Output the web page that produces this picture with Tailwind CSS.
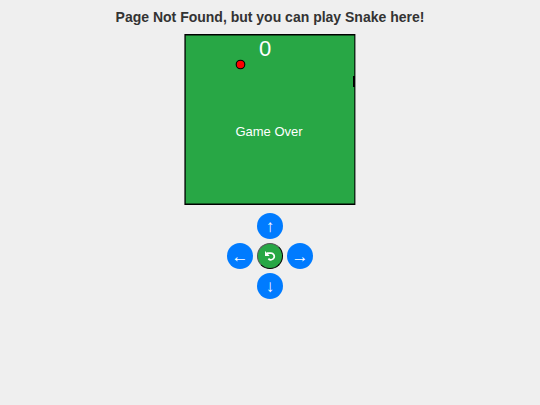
<!doctype html>
<html lang="en">

<head>
  <meta charset="UTF-8" />
  <meta name="viewport" content="width=device-width, initial-scale=1.0" />
  <title>Page Not Found</title>
  <script src="https://cdn.jsdelivr.net/npm/@tailwindcss/browser@4"></script>
</head>

<body class="min-h-screen bg-[#efefef] font-['Liberation_Sans',Arial,sans-serif] text-[#333]">
  <main class="flex flex-col items-center pt-2">
    <h1 class="text-center text-[14px] leading-[18px] font-bold">Page Not Found, but you can play Snake here!</h1>

    <!-- board -->
    <svg class="mt-2 h-[171px] w-[172px]" viewBox="0 0 172 171" role="img" aria-label="Snake board">
      <rect x="0.4" width="171" height="171" fill="#000" />
      <rect x="1.7" y="1.5" width="168.6" height="168" fill="#28a745" />
      <circle cx="56.5" cy="30.5" r="4.3" fill="#f00" stroke="#000" stroke-width="1.1" />
      <rect x="169" y="42" width="2" height="11" fill="#000" />
      <text x="81" y="22" text-anchor="middle" class="fill-white text-[22px]">0</text>
      <text x="85" y="102" text-anchor="middle" class="fill-white text-[13px]">Game Over</text>
    </svg>

    <!-- controls -->
    <div class="mt-2 grid grid-cols-3 gap-1 text-[17px] leading-none text-white">
      <button type="button" aria-label="Up" class="col-start-2 size-[26px] rounded-full bg-[#007bff]">↑</button>
      <button type="button" aria-label="Left" class="col-start-1 size-[26px] rounded-full bg-[#007bff]">←</button>
      <button type="button" aria-label="Restart"
        class="flex size-[26px] items-center justify-center rounded-full border border-t-[#555] border-r-black border-b-black border-l-[#555] bg-[#28a745]">
        <svg class="size-3" viewBox="0 0 12 12" fill="none">
          <path d="M3 3.2H7a3.3 3.3 0 1 1-2.6 5.4" stroke="#fff" stroke-width="1.7" />
          <path d="M1 1v5h4.6L4.2 4.2z" fill="#fff" />
        </svg>
      </button>
      <button type="button" aria-label="Right" class="size-[26px] rounded-full bg-[#007bff]">→</button>
      <button type="button" aria-label="Down" class="col-start-2 size-[26px] rounded-full bg-[#007bff]">↓</button>
    </div>
  </main>
</body>

</html>
